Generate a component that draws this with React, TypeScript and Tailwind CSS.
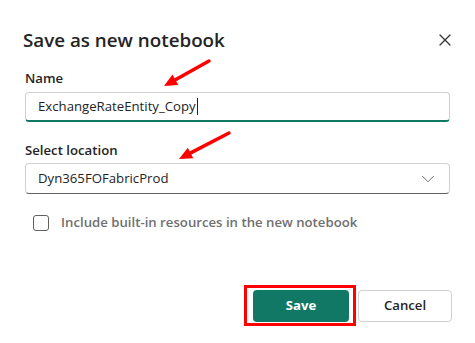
import { X, ChevronDown } from 'lucide-react';

const font = { fontFamily: '"Segoe UI", "Open Sans", "Noto Sans", sans-serif' };

function Arrow({ x1, y1, x2, y2 }: { x1: number; y1: number; x2: number; y2: number }) {
  // Annotation arrow: shaft from tail to just before the tip, filled head at tip.
  const dx = x2 - x1;
  const dy = y2 - y1;
  const len = Math.hypot(dx, dy);
  const ux = dx / len;
  const uy = dy / len;
  const head = 13;
  const half = 6;
  const bx = x2 - ux * head;
  const by = y2 - uy * head;
  const px = -uy * half;
  const py = ux * half;
  return (
    <g>
      <line x1={x1} y1={y1} x2={bx + ux * 2} y2={by + uy * 2} stroke="#ff0000" strokeWidth={3.5} strokeLinecap="round" />
      <polygon points={`${x2},${y2} ${bx + px},${by + py} ${bx - px},${by - py}`} fill="#ff0000" />
    </g>
  );
}

export default function App() {
  return (
    <div className="relative h-[343px] w-[475px] overflow-hidden bg-white text-[#242424]" style={font}>
      <div className="flex flex-col pl-[25px] pr-[25px] pt-[26px]">
        <div className="flex h-[28px] items-center justify-between">
          <h1 className="-ml-[2px] text-[18.8px] font-semibold leading-[28px]">Save as new notebook</h1>
          <button type="button" aria-label="Close" className="mr-[-7px] flex h-6 w-6 items-center justify-center text-[#333333]">
            <X className="h-[20px] w-[20px]" strokeWidth={1.5} />
          </button>
        </div>

        <label className="mt-[14px] text-[13.2px] font-semibold leading-[20px]">Name</label>
        <div className="mt-[4px] flex h-[30px] items-center rounded-[4px] border border-[#d1d1d1] border-b-2 border-b-[#117865] pl-[12px] text-[13.2px]">
          <span>ExchangeRateEntity_Copy</span>
          <span className="ml-[1px] h-[17px] w-px bg-[#242424]" />
        </div>

        <label className="mt-[18px] text-[13.2px] font-semibold leading-[20px]">Select location</label>
        <div className="mt-[3px] flex h-[31px] items-center justify-between rounded-[4px] border border-[#d1d1d1] border-b-[#616161] pl-[12px] pr-[10px] text-[13.2px]">
          <span>Dyn365FOFabricProd</span>
          <ChevronDown className="h-[22px] w-[22px] text-[#616161]" strokeWidth={1} />
        </div>

        <div className="mt-[19px] flex h-[20px] items-center pl-[8px]">
          <span className="h-[16px] w-[16px] rounded-[3px] border border-[#616161]" />
          <span className="ml-[12px] text-[13.2px] font-semibold text-[#707070]">Include built-in resources in the new notebook</span>
        </div>

        <div className="mt-[57px] flex justify-end gap-[9px]">
          <div className="relative">
            <button type="button" className="h-[32px] w-[96px] rounded-[4px] bg-[#117865] text-[13.2px] font-bold text-white">
              Save
            </button>
            <span className="pointer-events-none absolute left-[-9px] top-[-5px] h-[41px] w-[112px] border-[3px] border-[#ff0000]" />
          </div>
          <button type="button" className="mr-[-2px] h-[32px] w-[94px] rounded-[4px] border border-[#d1d1d1] bg-white text-[13.2px] font-semibold">
            Cancel
          </button>
        </div>
      </div>

      <svg className="pointer-events-none absolute left-0 top-0" width={475} height={343}>
        <Arrow x1={209} y1={61} x2={164} y2={86} />
        <Arrow x1={229} y1={133} x2={179} y2={159} />
      </svg>
    </div>
  );
}
